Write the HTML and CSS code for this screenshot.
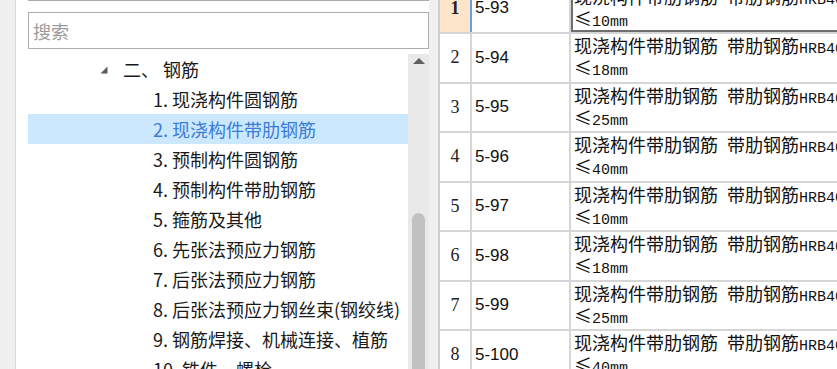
FILE: index.html
```html
<!DOCTYPE html>
<html lang="zh-CN">
<head>
<meta charset="utf-8">
<title>定额</title>
<link rel="stylesheet" href="styles.css">
</head>
<body>
<div class="strip"></div>
<div class="left">
  <div class="topline"></div>
  <div class="search">搜索</div>
  <div class="tree">
    <div class="list">
      <div class="node lvl1"><svg class="tri" width="8" height="8" viewBox="0 0 8 8"><polygon points="7.5,0.5 7.5,7.5 0.5,7.5" fill="#5a5a5a"/></svg><span>二、 钢筋</span></div>
      <div class="node lvl2">1. 现浇构件圆钢筋</div>
      <div class="node lvl2 sel">2. 现浇构件带肋钢筋</div>
      <div class="node lvl2">3. 预制构件圆钢筋</div>
      <div class="node lvl2">4. 预制构件带肋钢筋</div>
      <div class="node lvl2">5. 箍筋及其他</div>
      <div class="node lvl2">6. 先张法预应力钢筋</div>
      <div class="node lvl2">7. 后张法预应力钢筋</div>
      <div class="node lvl2">8. 后张法预应力钢丝束(钢绞线)</div>
      <div class="node lvl2">9. 钢筋焊接、机械连接、植筋</div>
      <div class="node lvl2">10. 铁件、螺栓</div>
    </div>
    <div class="scroll">
      <svg class="arrow" width="12" height="6" viewBox="0 0 12 6"><polygon points="6,0 12,6 0,6" fill="#606060"/></svg>
      <div class="thumb"></div>
    </div>
  </div>
</div>
<div class="splitter"></div>
<div class="grid">
  <div class="rows">
    <div class="row cur">
      <div class="rh">1</div>
      <div class="code">5-93</div>
      <div class="txt"><div class="ln">现浇构件带肋钢筋<span class="m"> </span>带肋钢筋<span class="m">HRB400</span>以内 直径</div><div class="ln"><span class="le">≤</span><span class="m">10mm</span></div></div>
    </div>
    <div class="row">
      <div class="rh">2</div>
      <div class="code">5-94</div>
      <div class="txt"><div class="ln">现浇构件带肋钢筋<span class="m"> </span>带肋钢筋<span class="m">HRB400</span>以内 直径</div><div class="ln"><span class="le">≤</span><span class="m">18mm</span></div></div>
    </div>
    <div class="row">
      <div class="rh">3</div>
      <div class="code">5-95</div>
      <div class="txt"><div class="ln">现浇构件带肋钢筋<span class="m"> </span>带肋钢筋<span class="m">HRB400</span>以内 直径</div><div class="ln"><span class="le">≤</span><span class="m">25mm</span></div></div>
    </div>
    <div class="row">
      <div class="rh">4</div>
      <div class="code">5-96</div>
      <div class="txt"><div class="ln">现浇构件带肋钢筋<span class="m"> </span>带肋钢筋<span class="m">HRB400</span>以内 直径</div><div class="ln"><span class="le">≤</span><span class="m">40mm</span></div></div>
    </div>
    <div class="row">
      <div class="rh">5</div>
      <div class="code">5-97</div>
      <div class="txt"><div class="ln">现浇构件带肋钢筋<span class="m"> </span>带肋钢筋<span class="m">HRB400</span>以上 直径</div><div class="ln"><span class="le">≤</span><span class="m">10mm</span></div></div>
    </div>
    <div class="row">
      <div class="rh">6</div>
      <div class="code">5-98</div>
      <div class="txt"><div class="ln">现浇构件带肋钢筋<span class="m"> </span>带肋钢筋<span class="m">HRB400</span>以上 直径</div><div class="ln"><span class="le">≤</span><span class="m">18mm</span></div></div>
    </div>
    <div class="row">
      <div class="rh">7</div>
      <div class="code">5-99</div>
      <div class="txt"><div class="ln">现浇构件带肋钢筋<span class="m"> </span>带肋钢筋<span class="m">HRB400</span>以上 直径</div><div class="ln"><span class="le">≤</span><span class="m">25mm</span></div></div>
    </div>
    <div class="row">
      <div class="rh">8</div>
      <div class="code">5-100</div>
      <div class="txt"><div class="ln">现浇构件带肋钢筋<span class="m"> </span>带肋钢筋<span class="m">HRB400</span>以上 直径</div><div class="ln"><span class="le">≤</span><span class="m">40mm</span></div></div>
    </div>
  </div>
</div>
</body>
</html>
```
FILE: styles.css
```css
* { box-sizing: border-box; }

body {
  margin: 0;
  width: 837px;
  height: 369px;
  overflow: hidden;
  display: flex;
  background: #fff;
  font-family: "Noto Sans CJK SC", "Noto Sans", sans-serif;
  color: #1a1a1a;
}

.strip {
  flex: none;
  width: 16px;
  background: #f0f0f0;
  border-right: 1px solid #d9d9d9;
}

.left {
  flex: none;
  width: 413px;
  padding-left: 12px;
  display: flex;
  flex-direction: column;
  background: #fff;
}

.topline {
  height: 1px;
  background: #ababab;
}

.search {
  margin-top: 11px;
  height: 37px;
  border: 1px solid #adadad;
  padding-left: 4px;
  display: flex;
  align-items: center;
  font-size: 18px;
  color: #9b9b9b;
}

.tree {
  margin-top: 5px;
  flex: 1;
  min-height: 0;
  display: flex;
}

.list {
  width: 380px;
  flex: none;
}

.node {
  height: 30px;
  line-height: 30px;
  font-size: 18px;
  white-space: nowrap;
  color: #1a1a1a;
}

.lvl1 {
  padding-left: 72px;
  display: flex;
  align-items: center;
}

.tri {
  margin-right: 15px;
  margin-top: 1px;
}

.lvl2 {
  padding-left: 125px;
}

.sel {
  background: #cce8ff;
  color: #3b7bd8;
}

.scroll {
  width: 21px;
  flex: none;
  background: #e9e9e9;
  display: flex;
  flex-direction: column;
  align-items: center;
}

.arrow {
  margin-top: 4px;
  flex: none;
}

.thumb {
  margin-top: 149px;
  width: 13px;
  flex: 1;
  background: #c1c1c1;
  border-radius: 7px 7px 0 0;
}

.splitter {
  flex: none;
  width: 11px;
  background: #f0f0f0;
  border-right: 2px solid #cfcfcf;
}

.grid {
  flex: 1;
  min-width: 0;
  overflow: hidden;
}

.rows {
  margin-top: -15.5px;
}

.row {
  display: flex;
  height: 49.5px;
  border-bottom: 2px solid #d6d6d6;
}

.rh {
  flex: none;
  width: 32px;
  border-right: 2px solid #d6d6d6;
  display: flex;
  align-items: center;
  justify-content: center;
  font-family: "Liberation Serif", serif;
  font-size: 18px;
  color: #222;
}

.cur .rh {
  background: #fde5c9;
  font-weight: bold;
  border-right-color: #6b9fe4;
}

.code {
  flex: none;
  width: 99px;
  padding-left: 3px;
  border-right: 2px solid #d6d6d6;
  display: flex;
  align-items: center;
  font-family: "Liberation Sans", sans-serif;
  font-size: 17px;
  color: #111;
}

.txt {
  flex: 1;
  padding-left: 3px;
  font-size: 18px;
  color: #111;
}

.cur .txt {
  box-shadow: inset 2px 0 0 #6e6e6e, inset 0 -2px 0 #6e6e6e;
}

.ln {
  height: 22px;
  line-height: 22px;
  white-space: nowrap;
}

.m {
  font-family: "Liberation Mono", monospace;
  font-size: 15px;
  line-height: 1;
  white-space: pre;
}

.le {
  display: inline-block;
  width: 18px;
  line-height: 1;
}
```
